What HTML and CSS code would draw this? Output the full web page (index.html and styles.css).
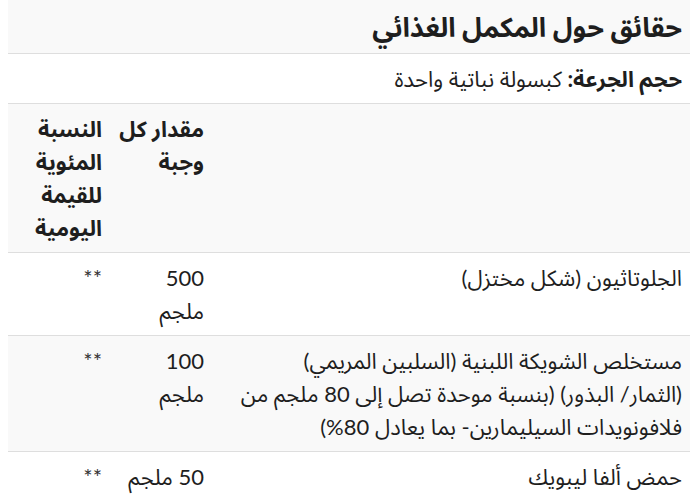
FILE: index.html
```html
<!DOCTYPE html>
<html lang="ar" dir="rtl">
<head>
<meta charset="utf-8">
<link rel="stylesheet" href="styles.css">
</head>
<body>
<table class="facts">
  <colgroup>
    <col class="c-name">
    <col class="c-amount">
    <col class="c-dv">
  </colgroup>
  <tr class="title-row">
    <th colspan="3" class="title">حقائق حول المكمل الغذائي</th>
  </tr>
  <tr class="plain">
    <td colspan="3"><b>حجم الجرعة:</b> كبسولة نباتية واحدة</td>
  </tr>
  <tr class="head-row">
    <th></th>
    <th><span class="nw">مقدار كل</span> وجبة</th>
    <th>النسبة المئوية للقيمة اليومية</th>
  </tr>
  <tr class="plain">
    <td>الجلوتاثيون (شكل مختزل)</td>
    <td>500 ملجم</td>
    <td class="stars">**</td>
  </tr>
  <tr class="shade">
    <td>مستخلص الشويكة اللبنية (السلبين المريمي) <span class="nw">(الثمار/ البذور)</span> (بنسبة موحدة تصل إلى 80 ملجم من فلافونويدات السيليمارين- بما يعادل 80%)</td>
    <td>100 ملجم</td>
    <td class="stars">**</td>
  </tr>
  <tr class="plain">
    <td>حمض ألفا ليبويك</td>
    <td>50 ملجم</td>
    <td class="stars">**</td>
  </tr>
</table>
</body>
</html>
```

FILE: styles.css
```css
html, body {
  background: #ffffff;
}
body {
  margin: 0 8px;
  font-family: Lato, "Noto Sans Arabic", "DejaVu Sans", sans-serif;
  color: #1e1e1e;
  font-size: 22px;
}
.facts {
  width: 682px;
  border-collapse: collapse;
  table-layout: fixed;
}
.c-amount { width: 102px; }
.c-dv { width: 102px; }
.facts td, .facts th {
  text-align: right;
  vertical-align: top;
  padding: 8px;
  line-height: 33px;
  border-bottom: 1px solid #dedede;
}
.facts th { font-weight: 700; }
.nw { white-space: nowrap; }
.facts .title {
  font-size: 27px;
  line-height: 37px;
}
.title-row, .head-row, .shade {
  background: #f9f9f9;
}
.plain { background: #ffffff; }
.stars {
  color: #333333;
}
```
